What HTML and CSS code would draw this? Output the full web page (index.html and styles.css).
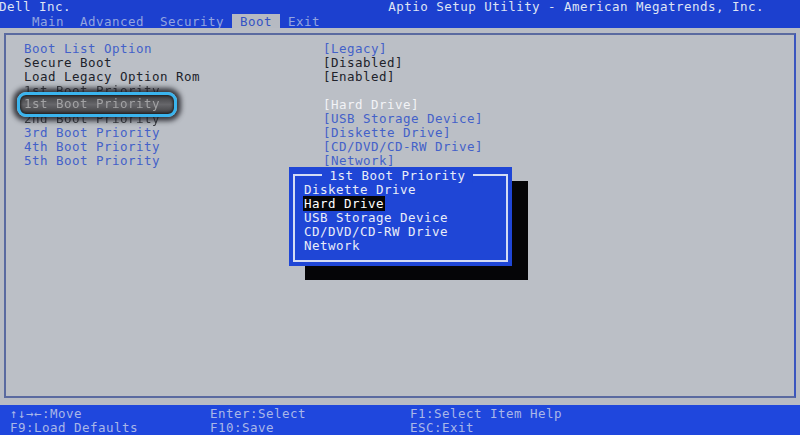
FILE: index.html
```html
<!DOCTYPE html>
<html>
<head>
<meta charset="utf-8">
<link rel="stylesheet" href="styles.css">
</head>
<body>
<div class="screen">
  <header class="topbar">
    <div class="title-row">
      <span class="vendor">Dell Inc.</span>
      <span class="utility">Aptio Setup Utility - American Megatrends, Inc.</span>
    </div>
    <nav class="tabs">
      <span class="tab">Main</span>
      <span class="tab">Advanced</span>
      <span class="tab">Security</span>
      <span class="tab active">Boot</span>
      <span class="tab">Exit</span>
    </nav>
  </header>

  <main class="main">
    <div class="frame">
      <div class="settings">
        <span class="label blue">Boot List Option</span><span class="value blue">[Legacy]</span>
        <span class="label dark">Secure Boot</span><span class="value dark">[Disabled]</span>
        <span class="label dark">Load Legacy Option Rom</span><span class="value dark">[Enabled]</span>
        <span class="label ghost">1st Boot Priority</span><span class="value"></span>
        <span class="label"></span><span class="value white">[Hard Drive]</span>
        <span class="label ghost">2nd Boot Priority</span><span class="value blue">[USB Storage Device]</span>
        <span class="label blue">3rd Boot Priority</span><span class="value blue">[Diskette Drive]</span>
        <span class="label blue">4th Boot Priority</span><span class="value blue">[CD/DVD/CD-RW Drive]</span>
        <span class="label blue">5th Boot Priority</span><span class="value blue">[Network]</span>
      </div>

      <div class="spotlight"><span>1st Boot Priority</span></div>

      <div class="popup">
        <div class="popup-box">
          <span class="popup-title">1st Boot Priority</span>
          <ul class="options">
            <li>Diskette Drive</li>
            <li><span class="selected">Hard Drive</span></li>
            <li>USB Storage Device</li>
            <li>CD/DVD/CD-RW Drive</li>
            <li>Network</li>
          </ul>
        </div>
      </div>
    </div>
  </main>

  <footer class="footer">
    <span>↑↓→←:Move</span>
    <span>Enter:Select</span>
    <span>F1:Select Item Help</span>
    <span>F9:Load Defaults</span>
    <span>F10:Save</span>
    <span>ESC:Exit</span>
  </footer>
</div>
</body>
</html>
```

FILE: styles.css
```css
* { box-sizing: border-box; }

html, body {
  margin: 0;
  padding: 0;
  width: 800px;
  height: 435px;
  overflow: hidden;
  background: #b8bcc4;
}

.screen {
  width: 800px;
  height: 435px;
  display: flex;
  flex-direction: column;
  font-family: "DejaVu Sans Mono", "Liberation Mono", monospace;
  font-size: 12.5px;
  letter-spacing: 0.47px;
  line-height: 14px;
}

/* ---------- top bar ---------- */
.topbar {
  height: 28px;
  background: #1c40cf;
  color: #dfe4f4;
}

.title-row {
  height: 14px;
  display: flex;
  justify-content: space-between;
}

.vendor { margin-left: -1px; }
.utility { padding-right: 36px; }

.tabs {
  height: 14px;
  display: flex;
  padding-left: 24px;
}

.tab {
  padding: 1px 8px 0 8px;
  color: #93a5df;
}

.tab.active {
  background: #b6bac2;
  color: #3352c4;
}

/* ---------- main gray area ---------- */
.main {
  height: 377px;
  padding: 5px 4px 7px 4px;
  background: #b8bcc4;
}

.frame {
  position: relative;
  height: 100%;
  border: 2px solid #5a6aa0;
  border-right-color: #3a55bf;
  background: #bbbfc6;
  padding: 7px 0 0 18px;
}

.settings {
  display: grid;
  grid-template-columns: 299px auto;
  grid-auto-rows: 14px;
}

.label, .value { white-space: pre; }

.blue { color: #4361c9; }
.dark { color: #20222a; }
.white { color: #f2f3f6; }
.ghost { color: #3c3e44; filter: blur(0.6px); }

/* highlighted item (overlay) */
.spotlight {
  position: absolute;
  left: 11px;
  top: 57px;
  width: 160px;
  height: 25px;
  border: 3px solid #3ab4ee;
  border-radius: 9px;
  background: linear-gradient(#3e3e40, #66666a 50%, #3e3e40);
  box-shadow: 0 0 5px 4px rgba(22, 24, 30, 0.8), inset 0 0 3px 1px #1c1c1e;
  padding: 2px 0 0 4px;
  color: #a2a2a4;
  white-space: pre;
}

.spotlight span { filter: blur(0.5px); }

/* ---------- popup ---------- */
.popup {
  position: absolute;
  left: 283px;
  top: 132px;
  width: 223px;
  height: 99px;
  background: #1f46d6;
  box-shadow: 16px 14px 0 #050507;
  padding: 7px 4px 4px 4px;
  color: #e9edf8;
}

.popup-box {
  position: relative;
  height: 100%;
  border: 2px solid #d4dcf4;
  padding: 7px 0 0 9px;
}

.popup-title {
  position: absolute;
  top: -7px;
  left: 50%;
  transform: translateX(-52%);
  padding: 0 8px;
  background: #1f46d6;
  white-space: pre;
}

.options {
  list-style: none;
  margin: 0;
  padding: 0;
}

.options li {
  height: 14px;
  white-space: pre;
}

.selected {
  background: #050507;
  color: #ffffff;
  padding: 0 1px;
  margin-left: -1px;
}

/* ---------- footer ---------- */
.footer {
  height: 30px;
  background: #1f47dd;
  color: #aab7e8;
  display: grid;
  grid-template-columns: 200px 200px 200px;
  grid-auto-rows: 14px;
  padding: 2px 0 0 10px;
}

.footer span { white-space: pre; }
```
